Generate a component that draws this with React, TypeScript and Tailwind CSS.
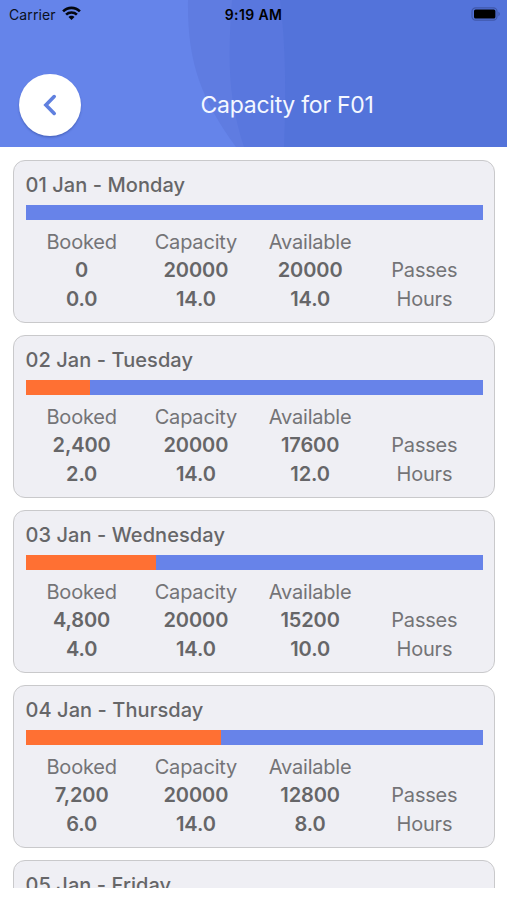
import type { ReactNode } from "react";

type Day = {
  label: string;
  used: number;
  passes?: [string, string, string];
  hours?: [string, string, string];
};

const days: Day[] = [
  { label: "01 Jan - Monday", used: 0, passes: ["0", "20000", "20000"], hours: ["0.0", "14.0", "14.0"] },
  { label: "02 Jan - Tuesday", used: 0.141, passes: ["2,400", "20000", "17600"], hours: ["2.0", "14.0", "12.0"] },
  { label: "03 Jan - Wednesday", used: 0.286, passes: ["4,800", "20000", "15200"], hours: ["4.0", "14.0", "10.0"] },
  { label: "04 Jan - Thursday", used: 0.428, passes: ["7,200", "20000", "12800"], hours: ["6.0", "14.0", "8.0"] },
  { label: "05 Jan - Friday", used: 0.571 }
];

function StatusBar() {
  return (
    <div className="relative grid h-7 grid-cols-3 items-center text-[14px] text-[#0b1020]">
      <div className="flex items-center gap-[6px] pl-[9px]">
        <span className="tracking-[0.1px]">Carrier</span>
        <svg className="-mt-[3px]" width="19" height="14" viewBox="0 0 19 14" fill="none" stroke="#05070f" strokeWidth="2.6">
          <path d="M1.1 5.4C5.8 .7 13.2 .7 17.9 5.4" />
          <path d="M4.1 8.6C7 5.8 12 5.8 14.9 8.6" />
          <path d="M6.5 11C8 9.4 11 9.4 12.5 11L9.5 13.9Z" fill="#05070f" stroke="none" />
        </svg>
      </div>
      <span className="text-center font-semibold tracking-[0.35px] text-black">9:19 AM</span>
      <svg className="mr-[6px] justify-self-end" width="30" height="14" viewBox="0 0 30 14">
        <rect x="1" y="0.8" width="25" height="12.4" rx="3.6" fill="none" stroke="#4058ab" strokeWidth="1.2" />
        <rect x="3" y="2.5" width="21.4" height="9" rx="1.6" fill="#000" />
        <path d="M27.4 4.8C29.3 5.5 29.3 8.5 27.4 9.2Z" fill="#4058ab" />
      </svg>
    </div>
  );
}

function Header() {
  return (
    <header className="relative h-[147px] shrink-0 overflow-hidden bg-[#6584ea]">
      <svg className="absolute inset-0" width="507" height="147" viewBox="0 0 507 147">
        <path d="M188 0C187 60 200 98 236 147H507V0Z" fill="#5f7ce1" />
        <path d="M232 0C228 55 227 95 244 147H507V0Z" fill="#5977de" />
        <path d="M280 0C286 45 286 100 284 147H507V0Z" fill="#5373da" />
      </svg>
      <StatusBar />
      <div className="relative mt-[46px] flex h-[62px] items-center">
        <button className="ml-[19px] flex size-[61.5px] shrink-0 items-center justify-center rounded-full bg-white shadow-[0_1.5px_2px_rgba(30,50,120,0.35)]">
          <svg width="14" height="22" viewBox="0 0 14 22" fill="none" stroke="#6080df" strokeWidth="3.6" strokeLinecap="round">
            <path d="M11.2 2.6L2.9 11L11.2 19.4" />
          </svg>
        </button>
        <h1 className="ml-[120px] text-[23px] tracking-[-0.25px] whitespace-nowrap text-[#f4f7ff]">Capacity for F01</h1>
      </div>
    </header>
  );
}

function Cell({ bold, children }: { bold?: boolean; children?: ReactNode }) {
  return (
    <span className={bold ? "font-semibold tracking-[-0.1px]" : "tracking-[-0.2px] text-[#747477]"}>
      {children}
    </span>
  );
}

function DayCard({ day }: { day: Day }) {
  return (
    <section className="h-[163px] shrink-0 rounded-[12px] border border-[#c9c9cb] bg-[#efeff4] px-[11.5px] pt-[10px] text-[#666668]">
      <h2 className="h-[28px] text-[20px] leading-[28px] font-medium tracking-[0.07px]">{day.label}</h2>
      <div className="mt-[6px] h-[15px] bg-[#6783e9]">
        <div className="h-full bg-[#ff7033]" style={{ width: `${day.used * 100}%` }} />
      </div>
      {day.passes && day.hours && (
        <div className="mt-[8px] -ml-px mr-px grid grid-cols-4 grid-rows-[28px_29px_28px] text-center text-[20px] leading-[28px]">
          <Cell>Booked</Cell>
          <Cell>Capacity</Cell>
          <Cell>Available</Cell>
          <Cell />
          {day.passes.map((value, i) => (
            <Cell key={i} bold>{value}</Cell>
          ))}
          <Cell>Passes</Cell>
          {day.hours.map((value, i) => (
            <Cell key={i} bold>{value}</Cell>
          ))}
          <Cell>Hours</Cell>
        </div>
      )}
    </section>
  );
}

export default function App() {
  return (
    <div className="flex h-[900px] w-[507px] flex-col overflow-hidden bg-white font-['Inter',sans-serif]">
      <Header />
      <main className="mb-[12px] flex min-h-0 flex-1 flex-col gap-[12px] overflow-hidden pt-[13px] pr-[12px] pl-[13px]">
        {days.map((day) => (
          <DayCard key={day.label} day={day} />
        ))}
      </main>
    </div>
  );
}
